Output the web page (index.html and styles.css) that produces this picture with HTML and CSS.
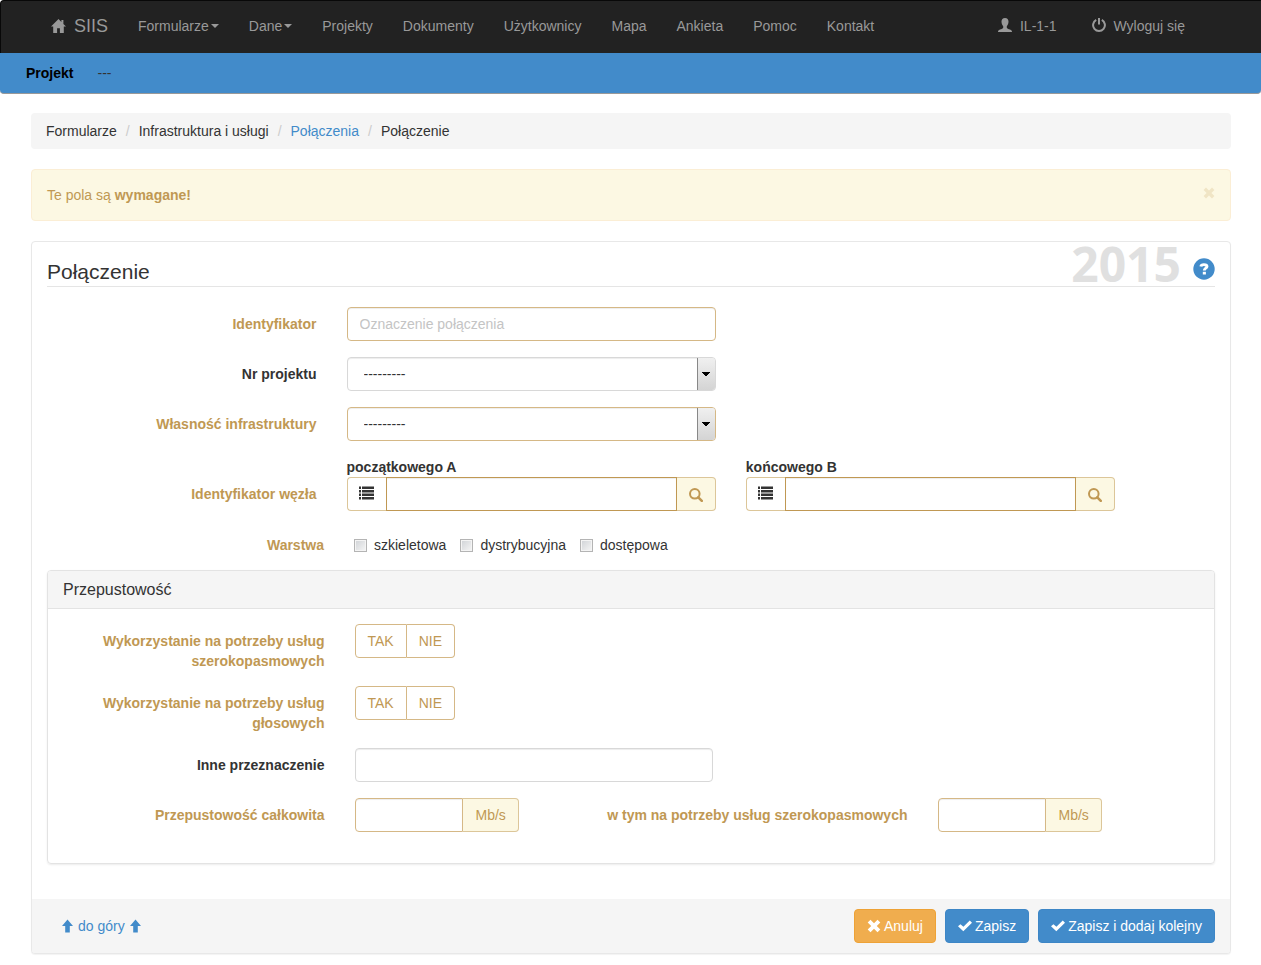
FILE: index.html
```html
<!DOCTYPE html>
<html lang="pl">
<head>
<meta charset="utf-8">
<title>SIIS - Połączenie</title>
<link rel="stylesheet" href="styles.css">
</head>
<body>
<svg class="sprite" aria-hidden="true">
  <symbol id="i-home" viewBox="0 0 15 14"><path d="M7.5 0 0 7.6h2.2V14h3.9V9.2h2.8V14h3.9V7.6H15L12.4 5V1h-2v2z"/></symbol>
  <symbol id="i-user" viewBox="0 0 14 14"><path d="M7 0C4.700 0 3.500 1.500 3.500 3.600c0 1.900.8 3.700 1.700 4.700v1.400C5 10.600 3.500 11 2 11.600.7 12.100 0 12.700 0 14h14c0-1.300-.7-1.900-2-2.400-1.500-.6-3-1-3.200-1.900V8.300c.9-1 1.700-2.800 1.700-4.700C10.500 1.500 9.300 0 7 0z"/></symbol>
  <symbol id="i-off" viewBox="0 0 14 14"><path d="M4.200 1.900a5.900 5.900 0 1 0 5.600 0" fill="none" stroke="currentColor" stroke-width="2"/><path d="M6 0h2v6.500H6z"/></symbol>
  <symbol id="i-list" viewBox="0 0 15 14"><path d="M0 .5h2v2.500H0zM3 .5H15v2.500H3zM0 4h2v2.500H0zM3 4H15v2.500H3zM0 7.500h2v2.500H0zM3 7.500H15v2.500H3zM0 11h2v2.500H0zM3 11H15v2.500H3z"/></symbol>
  <symbol id="i-search" viewBox="0 0 14 14"><circle cx="5.800" cy="5.800" r="4.800" fill="none" stroke="currentColor" stroke-width="2"/><path d="M9.300 9.300 12.800 12.800" stroke="currentColor" stroke-width="2.600" stroke-linecap="round"/></symbol>
  <symbol id="i-up" viewBox="0 0 12 14"><path d="M6 0 12 7H8.500v7h-5V7H0z"/></symbol>
  <symbol id="i-x" viewBox="0 0 14 14"><path d="M3.500.7 7 4.200 10.500.7l2.800 2.800L9.800 7l3.500 3.500-2.800 2.800L7 9.800l-3.500 3.500L.7 10.500 4.200 7 .7 3.500z"/></symbol>
  <symbol id="i-ok" viewBox="0 0 15 14"><path d="M12.600 1.200 15 3.600 5.700 12.600 0 7.400 2.600 5l3.200 2.900z"/></symbol>
  <symbol id="i-help" viewBox="0 0 22 22"><circle cx="11" cy="11" r="10.700"/><path d="M7.800 8.500c.3-1.400 1.300-1.900 3.100-1.900 1.900 0 3.100.6 3.100 1.900 0 1.700-2.700 1.700-2.700 4" fill="none" stroke="#fff" stroke-width="2.900"/><path d="M9.800 13.800h3.100v2.700H9.800z" fill="#fff"/></symbol>
</svg>

<header>
  <nav class="navbar">
    <a class="brand" href="#"><svg class="icon icon-wide"><use href="#i-home"/></svg>SIIS</a>
    <ul class="menu">
      <li><a href="#">Formularze<span class="caret"></span></a></li>
      <li><a href="#">Dane<span class="caret"></span></a></li>
      <li><a href="#">Projekty</a></li>
      <li><a href="#">Dokumenty</a></li>
      <li><a href="#">Użytkownicy</a></li>
      <li><a href="#">Mapa</a></li>
      <li><a href="#">Ankieta</a></li>
      <li><a href="#">Pomoc</a></li>
      <li><a href="#">Kontakt</a></li>
    </ul>
    <ul class="menu menu-right">
      <li><a href="#"><svg class="icon"><use href="#i-user"/></svg>IL-1-1</a></li>
      <li><a href="#"><svg class="icon"><use href="#i-off"/></svg>Wyloguj się</a></li>
    </ul>
  </nav>
  <div class="project-bar"><strong>Projekt</strong><span>---</span></div>
</header>

<main class="page">
  <ol class="breadcrumb">
    <li>Formularze</li>
    <li>Infrastruktura i usługi</li>
    <li><a href="#">Połączenia</a></li>
    <li>Połączenie</li>
  </ol>

  <div class="alert" role="alert">
    <span>Te pola są <strong>wymagane!</strong></span>
    <button class="close" type="button" aria-label="Zamknij"><svg class="icon-close"><use href="#i-x"/></svg></button>
  </div>

  <form class="panel">
    <div class="panel-body">
      <div class="legend">
        <h1>Połączenie</h1>
        <span class="year">2015</span>
        <a class="help" href="#" aria-label="Pomoc"><svg><use href="#i-help"/></svg></a>
      </div>

      <div class="row">
        <label class="label required" for="ident">Identyfikator</label>
        <input class="control warn span4" id="ident" type="text" placeholder="Oznaczenie połączenia">
      </div>
      <div class="row">
        <label class="label" for="project">Nr projektu</label>
        <div class="select span4"><select class="control" id="project"><option>---------</option></select></div>
      </div>
      <div class="row">
        <label class="label required" for="owner">Własność infrastruktury</label>
        <div class="select span4"><select class="control warn" id="owner"><option>---------</option></select></div>
      </div>
      <div class="row row-nodes">
        <span class="label required">Identyfikator węzła</span>
        <div class="span4">
          <label class="node-label" for="node-a">początkowego A</label>
          <div class="group">
            <button class="addon addon-list" type="button" aria-label="Lista"><svg class="icon-wide"><use href="#i-list"/></svg></button>
            <input class="control strong" id="node-a" type="text">
            <button class="addon addon-end" type="button" aria-label="Szukaj"><svg class="icon"><use href="#i-search"/></svg></button>
          </div>
        </div>
        <div class="span4">
          <label class="node-label" for="node-b">końcowego B</label>
          <div class="group">
            <button class="addon addon-list" type="button" aria-label="Lista"><svg class="icon-wide"><use href="#i-list"/></svg></button>
            <input class="control strong" id="node-b" type="text">
            <button class="addon addon-end" type="button" aria-label="Szukaj"><svg class="icon"><use href="#i-search"/></svg></button>
          </div>
        </div>
      </div>
      <div class="row row-layer">
        <span class="label required">Warstwa</span>
        <div class="checks">
          <label><input type="checkbox">szkieletowa</label>
          <label><input type="checkbox">dystrybucyjna</label>
          <label><input type="checkbox">dostępowa</label>
        </div>
      </div>

      <section class="subpanel">
        <h2>Przepustowość</h2>
        <div class="subpanel-body">
          <div class="row">
            <span class="label required">Wykorzystanie na potrzeby usług szerokopasmowych</span>
            <div class="toggle"><button type="button">TAK</button><button type="button">NIE</button></div>
          </div>
          <div class="row">
            <span class="label required">Wykorzystanie na potrzeby usług głosowych</span>
            <div class="toggle"><button type="button">TAK</button><button type="button">NIE</button></div>
          </div>
          <div class="row">
            <label class="label" for="other">Inne przeznaczenie</label>
            <input class="control span4" id="other" type="text">
          </div>
          <div class="row">
            <label class="label required" for="total">Przepustowość całkowita</label>
            <div class="group span2"><input class="control warn" id="total" type="text"><span class="addon addon-end">Mb/s</span></div>
            <label class="label required span4" for="broadband">w tym na potrzeby usług szerokopasmowych</label>
            <div class="group span2"><input class="control warn" id="broadband" type="text"><span class="addon addon-end">Mb/s</span></div>
          </div>
        </div>
      </section>
    </div>

    <footer class="panel-footer">
      <a class="to-top" href="#"><svg><use href="#i-up"/></svg>do góry<svg><use href="#i-up"/></svg></a>
      <div class="actions">
        <button class="btn btn-cancel" type="button"><svg class="icon"><use href="#i-x"/></svg>Anuluj</button>
        <button class="btn" type="button"><svg class="icon"><use href="#i-ok"/></svg>Zapisz</button>
        <button class="btn" type="button"><svg class="icon"><use href="#i-ok"/></svg>Zapisz i dodaj kolejny</button>
      </div>
    </footer>
  </form>
</main>
</body>
</html>
```
FILE: styles.css
```css
* { box-sizing: border-box; }

body {
  margin: 0;
  background: #fff;
  color: #333;
  font: 14px/20px "Liberation Sans", Arial, sans-serif;
}

a { color: #428bca; text-decoration: none; }
ul, ol { margin: 0; padding: 0; list-style: none; }
button, input, select { font: inherit; color: inherit; margin: 0; }
svg { display: block; flex: none; fill: currentColor; }

.sprite { position: absolute; width: 0; height: 0; }
.icon { width: 14px; height: 14px; }
.icon-wide { width: 15px; height: 14px; }

/* Navigation */
.navbar {
  display: flex;
  min-height: 53px;
  padding: 0 61px 0 36px;
  background: #222;
  border-top: 1px solid #080808;
  border-left: 1px solid #080808;
  border-top-left-radius: 4px;
}
.navbar a { display: flex; align-items: center; height: 50px; padding: 0 15px; color: #999; }
.brand { gap: 8px; font-size: 18px; }
.navbar .brand { padding-left: 14px; }
.menu { display: flex; }
.menu-right { margin-left: auto; }
.menu-right a { gap: 8px; }
.menu-right li + li { margin-left: 5px; }
.menu-right svg { margin-bottom: 2px; }
.caret { margin-left: 2px; border: 4px solid transparent; border-top-color: currentColor; border-bottom: 0; }

.project-bar {
  display: flex;
  gap: 24px;
  height: 41px;
  padding: 10px 26px;
  background: #428bca;
  border-bottom: 1px solid #999;
  border-radius: 0 0 4px 4px;
}
.project-bar strong { color: #000; }

/* Page */
.page { padding: 19px 30px 11px 31px; }

.breadcrumb {
  display: flex;
  margin-bottom: 20px;
  padding: 8px 15px;
  background: #f5f5f5;
  border-radius: 4px;
}
.breadcrumb li + li::before { content: "/"; padding: 0 9px; color: #ccc; }

.alert {
  display: flex;
  justify-content: space-between;
  margin-bottom: 20px;
  padding: 15px;
  background: #fcf8e3;
  border: 1px solid #fbeed5;
  border-radius: 4px;
  color: #c09853;
}
.close { height: 16px; padding: 0; border: 0; background: none; color: #f0e5c5; }
.icon-close { width: 12px; height: 12px; }

.panel {
  background: #fff;
  border: 1px solid #e8e8e8;
  border-radius: 4px;
  box-shadow: 0 1px 1px rgba(0, 0, 0, 0.05);
}
.panel-body { padding: 0 15px 35px; }

.legend {
  display: flex;
  align-items: flex-end;
  height: 45px;
  margin-bottom: 20px;
  border-bottom: 1px solid #e5e5e5;
}
.legend h1 { flex: 1; margin: 0; font-size: 21px; font-weight: 400; line-height: 28px; }
.year { color: #e0e0e0; font-family: "Noto Sans", "Open Sans", sans-serif; font-size: 48px; font-weight: 700; line-height: 44px; }
.help { padding: 0 0 6px 12px; }
.help svg { width: 22px; height: 22px; }

/* Twelve-column form rows */
.row {
  display: grid;
  grid-template-columns: repeat(12, 1fr);
  margin: 0 -15px 16px;
}
.row > * { margin: 0 15px; min-width: 0; }
.label {
  grid-column: span 3;
  padding-top: 7px;
  font-weight: 700;
  text-align: right;
}
.required { color: #c09853; }
.span2 { grid-column: span 2; }
.span4 { grid-column: span 4; }

.control {
  width: 100%;
  height: 34px;
  padding: 6px 12px;
  background: #fff;
  border: 1px solid #d8d8d8;
  border-radius: 4px;
  box-shadow: inset 0 1px 1px rgba(0, 0, 0, 0.075);
}
.row > .control { width: auto; }
.control::placeholder { color: #c4c4c4; opacity: 1; }
.warn { border-color: #d5b886; }
.strong { border-color: #c09853; }

.select { position: relative; }
.select select { display: block; appearance: none; padding-left: 16px; }
.select::after {
  content: "";
  position: absolute;
  top: 1px;
  right: 1px;
  bottom: 1px;
  width: 17px;
  border-left: 1px solid #888;
  background:
    linear-gradient(#000, #000) 4px 14px / 8px 1px no-repeat,
    linear-gradient(#000, #000) 5px 15px / 6px 1px no-repeat,
    linear-gradient(#000, #000) 6px 16px / 4px 1px no-repeat,
    linear-gradient(#000, #000) 7px 17px / 2px 1px no-repeat,
    linear-gradient(#f0f0f0, #d4d4d4);
  border-radius: 0 3px 3px 0;
  pointer-events: none;
}

.row-nodes { align-items: end; }
.row-nodes .label { padding-bottom: 7px; }
.node-label { display: block; font-weight: 700; }

.group { display: flex; }
.group .control { flex: 1; min-width: 0; }
.group .control:first-child { border-radius: 4px 0 0 4px; }
.group .control:not(:first-child) { border-radius: 0; }
.addon {
  display: flex;
  align-items: center;
  height: 34px;
  padding: 0 12px;
  background: #fcf8e3;
  border: 1px solid #dcc699;
  color: #c09853;
}
.addon-end { border-left: 0; border-radius: 0 4px 4px 0; }
.addon-list { padding: 0 12px 0 11px; border-right: 0; border-radius: 4px 0 0 4px; background: #fff; color: #333; }
.addon-list svg { margin-bottom: 2px; }
.addon-end svg { margin-top: 2px; }

.row-layer { margin: 0 0 15px; }
.row-layer .label { padding-top: 8px; }
.checks { grid-column: span 9; display: flex; gap: 14px; padding-top: 8px; }
.checks label { display: flex; align-items: center; gap: 7px; }
.checks input {
  appearance: none;
  width: 13px;
  height: 13px;
  border: 1px solid #b4b4b4;
  background: linear-gradient(135deg, #cfd2d6, #f6f6f6);
  box-shadow: inset 0 0 0 1px #f4f4f4;
}

.subpanel {
  border: 1px solid #e3e3e3;
  border-radius: 4px;
  box-shadow: 0 1px 2px rgba(0, 0, 0, 0.08);
}
.subpanel h2 {
  margin: 0;
  padding: 9px 15px 8px;
  background: #f5f5f5;
  border-bottom: 1px solid #e3e3e3;
  border-radius: 3px 3px 0 0;
  font-size: 16px;
  font-weight: 400;
}
.subpanel-body { padding: 15px; }
.subpanel-body .row { margin-bottom: 15px; }
.subpanel-body .row:nth-child(n+3) { margin-bottom: 16px; }

.toggle { grid-column: span 9; display: flex; align-items: flex-start; }
.toggle button {
  height: 34px;
  padding: 0 12px;
  background: #fff;
  border: 1px solid #d5b886;
  border-radius: 4px 0 0 4px;
  color: #c09853;
}
.toggle button + button { border-left: 0; border-radius: 0 4px 4px 0; }

/* Footer */
.panel-footer {
  display: flex;
  align-items: center;
  justify-content: space-between;
  padding: 10px 15px;
  background: #f5f5f5;
  border-radius: 0 0 3px 3px;
}
.to-top { display: flex; align-items: center; gap: 5px; padding-left: 15px; }
.to-top svg { width: 11px; height: 14px; }
.actions { display: flex; gap: 9px; }
.btn {
  display: flex;
  align-items: center;
  gap: 3px;
  height: 34px;
  padding: 0 12px;
  background: #428bca;
  border: 1px solid #3d86c6;
  border-radius: 4px;
  color: #fff;
}
.btn-cancel { background: #f0ad4e; border-color: #eea236; }
```
